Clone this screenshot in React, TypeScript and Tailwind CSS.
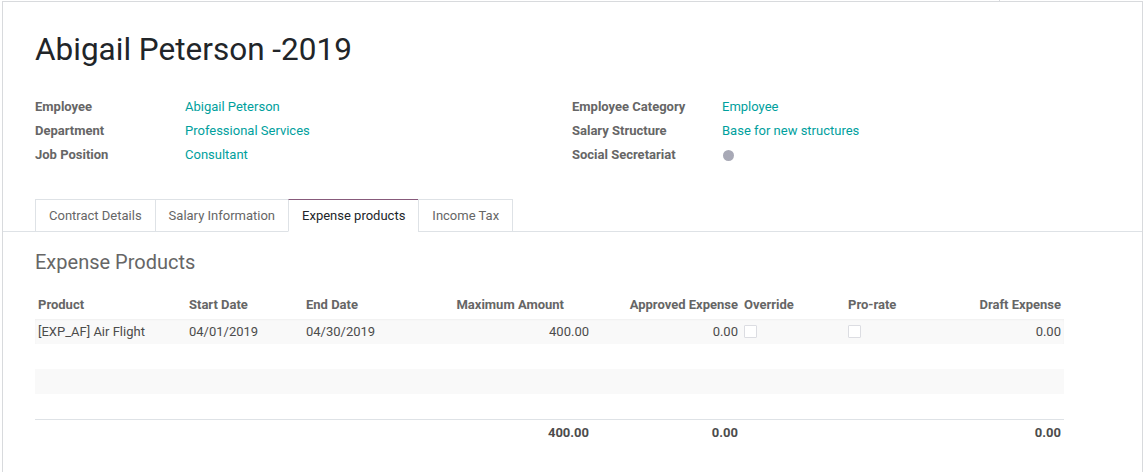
import React from 'react';

const fieldsLeft = [
    { label: 'Employee', value: 'Abigail Peterson' },
    { label: 'Department', value: 'Professional Services' },
    { label: 'Job Position', value: 'Consultant' },
];

const fieldsRight = [
    { label: 'Employee Category', value: 'Employee' },
    { label: 'Salary Structure', value: 'Base for new structures' },
    { label: 'Social Secretariat', value: null },
];

const tabs = ['Contract Details', 'Salary Information', 'Expense products', 'Income Tax'];

const cols = 'grid grid-cols-[151px_117px_126px_163px_149px_104px_99px_120px]';

const Checkbox: React.FC = () => (
    <span className="inline-block h-[13px] w-[13px] rounded-[1px] border border-[#dcdde2] bg-white align-middle" />
);

const FieldGroup: React.FC<{ items: { label: string; value: string | null }[] }> = ({ items }) => (
    <div className="flex flex-col">
        {items.map((f) => (
            <div key={f.label} className="flex h-[24px] items-center">
                <div className="w-[150px] font-bold text-[#666666]">{f.label}</div>
                {f.value ? (
                    <div className="text-[#00a09d]">{f.value}</div>
                ) : (
                    <span className="ml-[1px] h-[11px] w-[11px] rounded-full bg-[#a8a9b6]" />
                )}
            </div>
        ))}
    </div>
);

export default function App() {
    return (
        <div
            className="relative h-[472px] w-full overflow-hidden bg-white text-[13px] text-[#4c4c4c]"
            style={{ fontFamily: 'Roboto, "Noto Sans", sans-serif' }}
        >
            <div className="absolute left-[999px] top-0 h-[2px] w-[1px] bg-[#d8dadd]" />
            <div className="ml-[2px] mt-[1px] h-[500px] w-[1141px] border-l border-r border-t border-[#d8dadd]">
                {/* Title */}
                <div className="px-[32px] pt-[29px]">
                    <h1 className="text-[31.5px] leading-[37px] text-[#212529]">Abigail Peterson -2019</h1>
                </div>

                {/* Header fields */}
                <div className="mt-[27px] flex px-[32px]">
                    <div className="w-[537px]">
                        <FieldGroup items={fieldsLeft} />
                    </div>
                    <FieldGroup items={fieldsRight} />
                </div>

                {/* Notebook tabs */}
                <div className="mt-[32px] flex border-b border-[#dee2e6] pl-[32px]">
                    {tabs.map((t) => {
                        const active = t === 'Expense products';
                        return (
                            <div
                                key={t}
                                className={`-mb-px flex h-[33px] items-center border px-[13px] ${
                                    active
                                        ? 'border-[#dee2e6] border-b-white border-t-[#875a7b] text-[#212529]'
                                        : 'border-[#dee2e6] text-[#666666]'
                                } -ml-px first:ml-0`}
                            >
                                {t}
                            </div>
                        );
                    })}
                </div>

                {/* Tab content */}
                <div className="px-[32px]">
                    <h2 className="mt-[18px] text-[20px] leading-[24px] text-[#666666]">Expense Products</h2>

                    <div className="mt-[17px] w-[1029px]">
                        <div className={`${cols} h-[28px] items-center font-bold text-[#666666]`}>
                            <div className="px-[3px]">Product</div>
                            <div className="px-[3px]">Start Date</div>
                            <div className="px-[3px]">End Date</div>
                            <div className="pr-[28px] text-right">Maximum Amount</div>
                            <div className="pr-[3px] text-right whitespace-nowrap">Approved Expense</div>
                            <div className="px-[3px]">Override</div>
                            <div className="px-[3px]">Pro-rate</div>
                            <div className="px-[3px] text-right">Draft Expense</div>
                        </div>

                        <div className={`${cols} h-[25px] items-center bg-[#f9f9f9] shadow-[inset_0_1px_2px_rgba(0,0,0,0.04)]`}>
                            <div className="px-[3px]">[EXP_AF] Air Flight</div>
                            <div className="px-[3px]">04/01/2019</div>
                            <div className="px-[3px]">04/30/2019</div>
                            <div className="px-[3px] text-right">400.00</div>
                            <div className="px-[3px] text-right">0.00</div>
                            <div className="flex px-[3px]">
                                <Checkbox />
                            </div>
                            <div className="flex px-[3px]">
                                <Checkbox />
                            </div>
                            <div className="px-[3px] text-right">0.00</div>
                        </div>
                        <div className="h-[25px]" />
                        <div className="h-[25px] bg-[#f9f9f9]" />
                        <div className="h-[25px]" />

                        <div className={`${cols} h-[26px] items-center border-t border-[#dee2e6] font-bold`}>
                            <div />
                            <div />
                            <div />
                            <div className="px-[3px] text-right">400.00</div>
                            <div className="px-[3px] text-right">0.00</div>
                            <div />
                            <div />
                            <div className="px-[3px] text-right">0.00</div>
                        </div>
                    </div>
                </div>
            </div>
        </div>
    );
}
